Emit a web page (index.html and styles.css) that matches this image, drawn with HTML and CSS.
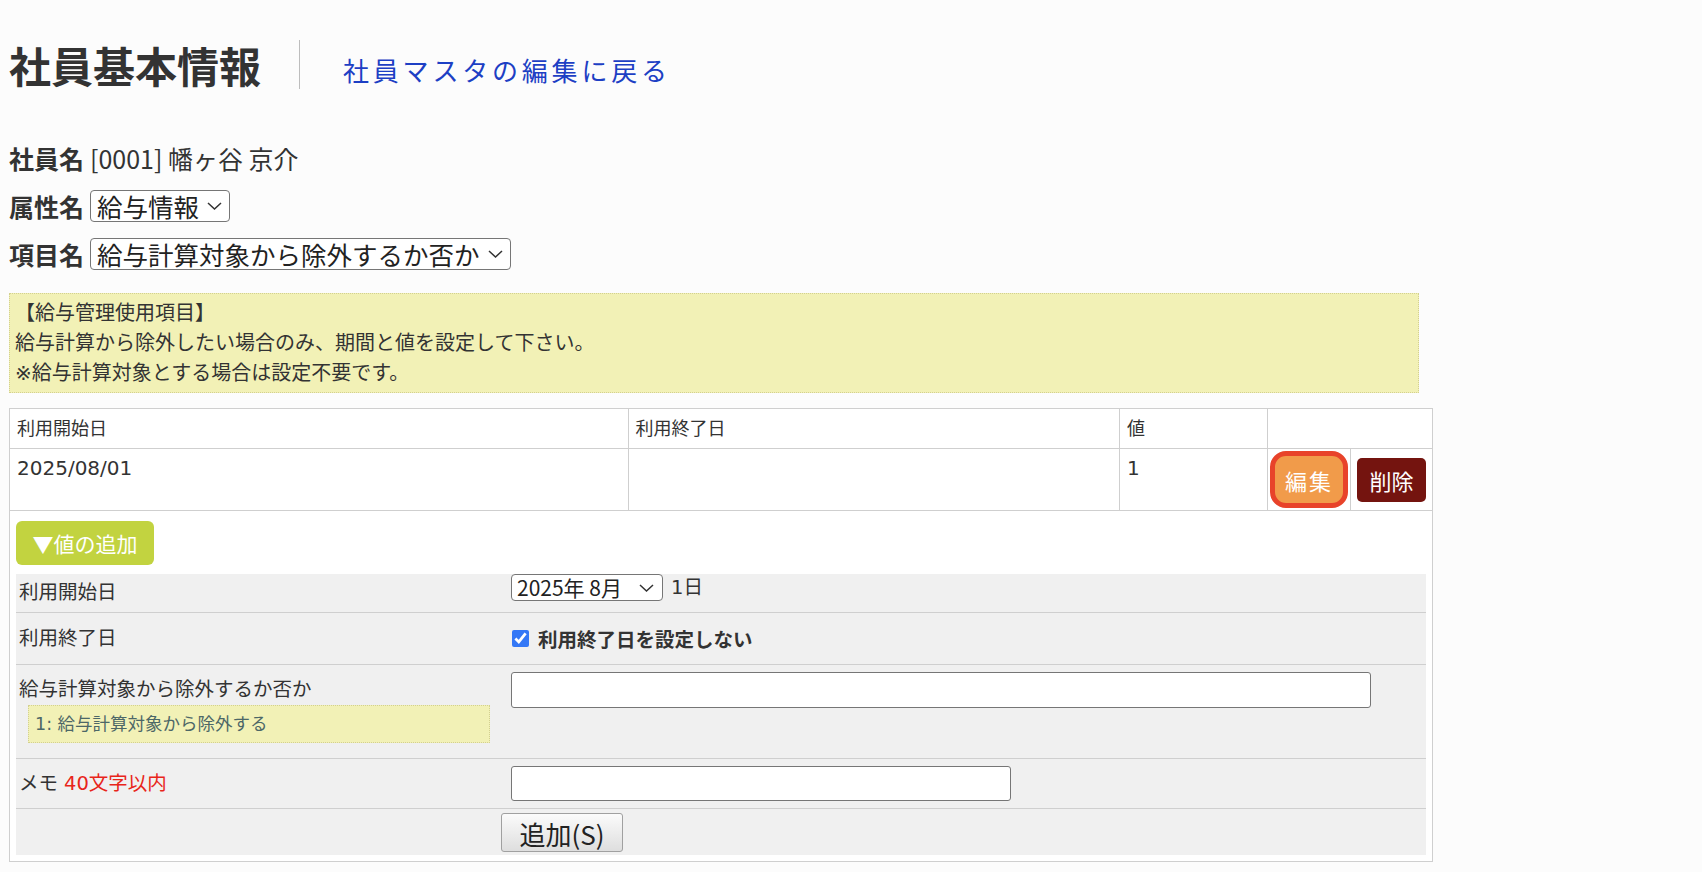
FILE: index.html
```html
<!DOCTYPE html>
<html lang="ja">
<head>
    <meta charset="UTF-8">
    <meta name="viewport" content="width=device-width, initial-scale=1.0">
    <title>社員基本情報</title>
    <link rel="stylesheet" href="styles.css">
</head>
<body>
<div class="page">

    <div class="page-head">
        <h1 class="page-title">社員基本情報</h1>
        <span class="head-sep"></span>
        <a class="back-link" href="#">社員マスタの編集に戻る</a>
    </div>

    <div class="info">
        <div class="info-row"><b class="info-label">社員名</b><span>[0001] 幡ヶ谷 京介</span></div>
        <div class="info-row">
            <b class="info-label">属性名</b>
            <select class="sel sel-big sel-attr"><option>給与情報</option></select>
        </div>
        <div class="info-row">
            <b class="info-label">項目名</b>
            <select class="sel sel-big sel-item"><option>給与計算対象から除外するか否か</option></select>
        </div>
    </div>

    <div class="notice">
        【給与管理使用項目】<br>
        給与計算から除外したい場合のみ、期間と値を設定して下さい。<br>
        ※給与計算対象とする場合は設定不要です。
    </div>

    <table class="list">
        <colgroup>
            <col class="c-start">
            <col class="c-end">
            <col class="c-val">
            <col class="c-btn">
            <col class="c-btn2">
        </colgroup>
        <tr class="list-head">
            <th>利用開始日</th>
            <th>利用終了日</th>
            <th>値</th>
            <th colspan="2"></th>
        </tr>
        <tr class="list-row">
            <td>2025/08/01</td>
            <td></td>
            <td>1</td>
            <td class="btn-cell"><button class="btn-edit">編集</button></td>
            <td class="btn-cell"><button class="btn-del">削除</button></td>
        </tr>
        <tr>
            <td colspan="5" class="add-cell">
                <button class="btn-toggle">▼値の追加</button>

                <div class="add-form">
                    <div class="add-row r-start">
                        <div class="add-label">利用開始日</div>
                        <div class="add-value">
                            <select class="sel sel-month"><option>2025年 8月</option></select>
                            <span class="day">1日</span>
                        </div>
                    </div>
                    <div class="add-row r-end">
                        <div class="add-label">利用終了日</div>
                        <div class="add-value">
                            <label class="no-end"><input type="checkbox" checked>利用終了日を設定しない</label>
                        </div>
                    </div>
                    <div class="add-row r-value">
                        <div class="add-label">
                            <div>給与計算対象から除外するか否か</div>
                            <div class="hint">1: 給与計算対象から除外する</div>
                        </div>
                        <div class="add-value">
                            <input type="text" class="txt txt-wide">
                        </div>
                    </div>
                    <div class="add-row r-memo">
                        <div class="add-label">メモ <span class="limit">40文字以内</span></div>
                        <div class="add-value">
                            <input type="text" class="txt txt-memo">
                        </div>
                    </div>
                    <div class="add-row r-submit">
                        <div class="add-label"></div>
                        <div class="add-value">
                            <button class="btn-add">追加(S)</button>
                        </div>
                    </div>
                </div>
            </td>
        </tr>
    </table>

</div>
</body>
</html>
```

FILE: styles.css
```css
* {
    box-sizing: border-box;
}

body {
    margin: 0;
    background-color: #fcfcfc;
    color: #333;
    font-family: "Noto Sans CJK JP", sans-serif;
}

.page {
    padding: 0 0 0 9px;
}

/* heading */
.page-head {
    display: flex;
    align-items: center;
    height: 49px;
    margin-top: 40px;
}

.page-title {
    margin: 0;
    font-size: 42px;
    font-weight: bold;
    line-height: 49px;
    color: #333;
}

.head-sep {
    width: 1px;
    height: 49px;
    margin-left: 38px;
    background-color: #bdbdbd;
}

.back-link {
    margin-left: 43px;
    padding-top: 10px;
    font-size: 26px;
    letter-spacing: 3.8px;
    color: #1d3fc4;
    text-decoration: none;
}

/* employee / attribute lines */
.info {
    margin-top: 45px;
}

.info-row {
    display: flex;
    align-items: center;
    gap: 6px;
    height: 48px;
    font-size: 25px;
}

.info-label {
    font-size: 25px;
}

.sel {
    appearance: none;
    -webkit-appearance: none;
    background-color: #fff;
    background-image: url("data:image/svg+xml,%3Csvg xmlns='http://www.w3.org/2000/svg' width='15' height='8' viewBox='0 0 15 8'%3E%3Cpath d='M1 1l6.5 6L14 1' fill='none' stroke='%23333' stroke-width='1.5'/%3E%3C/svg%3E");
    background-repeat: no-repeat;
    border: 1px solid #767676;
    border-radius: 4px;
    color: #222;
    font-family: "Noto Sans CJK JP", sans-serif;
}

.sel-big {
    height: 32px;
    padding: 0 30px 0 6px;
    font-size: 25.5px;
    line-height: 30px;
    background-position: right 7px center;
}

.sel-attr {
    width: 140px;
}

.sel-item {
    width: 421px;
}

/* yellow notice */
.notice {
    width: 1410px;
    height: 100px;
    margin-top: 15px;
    padding: 4px 5px;
    background-color: #f2f1b6;
    border: 1px dotted #d3d08f;
    font-family: "DejaVu Sans", "Noto Sans CJK JP", sans-serif;
    font-size: 20px;
    line-height: 30px;
    color: #333;
}

/* history table */
.list {
    width: 1424px;
    margin-top: 15px;
    border-collapse: collapse;
    background-color: #fff;
    font-family: "DejaVu Sans", "Noto Sans CJK JP", sans-serif;
}

.c-start { width: 619px; }
.c-end { width: 492px; }
.c-val { width: 148px; }
.c-btn { width: 83px; }
.c-btn2 { width: 82px; }

.list th,
.list td {
    border: 1px solid #cfcfcf;
    text-align: left;
}

.list-head th {
    height: 40px;
    padding: 0 7px 4px 7px;
    font-size: 18px;
    font-weight: normal;
    vertical-align: middle;
}

.list-row td {
    height: 62px;
    padding: 6px 7px;
    font-size: 20px;
    line-height: 26px;
    vertical-align: top;
}

.list-row td.btn-cell {
    padding: 0;
    text-align: center;
    vertical-align: middle;
}

.btn-edit {
    width: 78px;
    height: 57px;
    border: 5px solid #e8432a;
    border-radius: 16px;
    background-color: #f19b4a;
    color: #fff;
    font-family: "Noto Sans CJK JP", sans-serif;
    font-size: 22px;
    letter-spacing: 2px;
    cursor: pointer;
}

.btn-del {
    width: 69px;
    height: 44px;
    border: none;
    border-radius: 5px;
    background-color: #74140f;
    color: #fff;
    font-family: "Noto Sans CJK JP", sans-serif;
    font-size: 22px;
    cursor: pointer;
}

/* add form */
.list td.add-cell {
    padding: 10px 6px 6px 6px;
}

.btn-toggle {
    display: block;
    width: 138px;
    height: 44px;
    margin-bottom: 9px;
    border: none;
    border-radius: 6px;
    background-color: #c2d340;
    color: #fff;
    font-family: "Noto Sans CJK JP", sans-serif;
    font-size: 21px;
    cursor: pointer;
}

.add-form {
    background-color: #f0f0f0;
    font-size: 19.5px;
    color: #333;
}

.add-row {
    display: grid;
    grid-template-columns: 485px 1fr;
    border-bottom: 1px solid #cfcfcf;
}

.add-row:last-child {
    border-bottom: none;
}

.add-label {
    display: flex;
    align-items: center;
    padding-left: 3px;
    line-height: 26px;
}

.add-value {
    display: flex;
    align-items: center;
}

.r-start { height: 39px; }
.r-end { height: 52px; }
.r-value { height: 94px; }
.r-memo { height: 50px; }
.r-submit { height: 46px; }

.r-start .add-value {
    align-items: flex-start;
}

.sel-month {
    width: 152px;
    height: 27px;
    margin-left: 10px;
    padding: 0 28px 0 5px;
    font-size: 21px;
    line-height: 25px;
    background-position: right 8px center;
}

.day {
    margin-left: 8px;
    line-height: 27px;
}

.no-end {
    display: flex;
    align-items: center;
    font-weight: bold;
}

.no-end input {
    width: 17px;
    height: 17px;
    margin: 0 9px 0 11px;
    accent-color: #3478f6;
}

.r-value .add-label {
    display: block;
    padding-top: 12px;
}

.r-value .add-value {
    align-items: flex-start;
}

.hint {
    width: 462px;
    height: 38px;
    margin: 2px 0 0 9px;
    padding-left: 6px;
    background-color: #f2f1b6;
    border: 1px dotted #d3d08f;
    font-size: 17.5px;
    line-height: 36px;
    color: #4d6767;
}

.limit {
    margin-left: 6px;
    color: #e8251a;
}

.txt {
    margin-left: 10px;
    border: 1px solid #767676;
    border-radius: 3px;
    background-color: #fff;
}

.txt-wide {
    width: 860px;
    height: 36px;
    margin-top: 7px;
}

.txt-memo {
    width: 500px;
    height: 35px;
}

.btn-add {
    width: 122px;
    height: 39px;
    border: 1px solid #a0a0a0;
    border-radius: 3px;
    background: linear-gradient(#fbfbfb, #dedede);
    color: #222;
    font-family: "Noto Sans CJK JP", sans-serif;
    font-size: 26px;
    line-height: 37px;
    cursor: pointer;
}
```
